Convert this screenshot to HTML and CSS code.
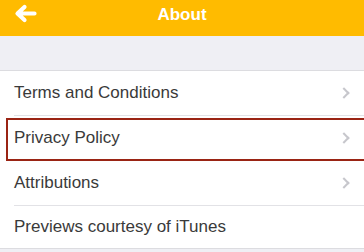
FILE: index.html
```html
<!DOCTYPE html>
<html lang="en">
<head>
    <meta charset="UTF-8">
    <link rel="stylesheet" href="styles.css">
</head>
<body>
    <header class="navbar">
        <a class="back" href="#">
            <svg width="23" height="19" viewBox="0 0 23 19">
                <path d="M20.5 9.5 H4 M10.5 3 L3.5 9.5 L10.5 16" fill="none" stroke="#fff" stroke-width="4.2" stroke-linecap="round" stroke-linejoin="round"/>
            </svg>
        </a>
        <h1 class="title">About</h1>
    </header>

    <div class="spacer"></div>

    <ul class="menu">
        <li class="menu-item">
            <span>Terms and Conditions</span>
            <span class="chevron"></span>
        </li>
        <li class="menu-item selected">
            <span>Privacy Policy</span>
            <span class="chevron"></span>
        </li>
        <li class="menu-item">
            <span>Attributions</span>
            <span class="chevron"></span>
        </li>
        <li class="menu-item">
            <span>Previews courtesy of iTunes</span>
        </li>
    </ul>
</body>
</html>
```

FILE: styles.css
```css
* {
    margin: 0;
    padding: 0;
    box-sizing: border-box;
    font-family: "Liberation Sans", Arial, sans-serif;
}

body {
    background: #efeff4;
    width: 364px;
    height: 252px;
    overflow: hidden;
}

.navbar {
    height: 36px;
    background: #ffbb00;
    display: flex;
    align-items: center;
    justify-content: center;
    position: relative;
}

.back {
    position: absolute;
    left: 14px;
    top: 4px;
    display: flex;
}

.title {
    color: #fff;
    font-size: 17px;
    font-weight: bold;
    margin-top: -6px;
}

.spacer {
    height: 34px;
}

.menu {
    list-style: none;
    background: #fff;
    border-top: 1px solid #dcdce0;
    border-bottom: 1px solid #dcdce0;
}

.menu-item {
    height: 45px;
    margin-left: 14px;
    padding-right: 12px;
    display: flex;
    align-items: center;
    justify-content: space-between;
    font-size: 17px;
    color: #3a3a3a;
    border-bottom: 1px solid #e2e2e6;
    position: relative;
}

.menu-item:last-child {
    height: 42px;
    border-bottom: none;
}

.menu-item.selected::after {
    content: "";
    position: absolute;
    left: -8px;
    right: -11px;
    top: 2px;
    bottom: -1px;
    border: 2px solid #9a2414;
    border-right-color: #e01010;
}

.chevron {
    width: 8px;
    height: 8px;
    border-top: 2px solid #c7c7cc;
    border-right: 2px solid #c7c7cc;
    transform: rotate(45deg);
    margin-right: 4px;
}
```
